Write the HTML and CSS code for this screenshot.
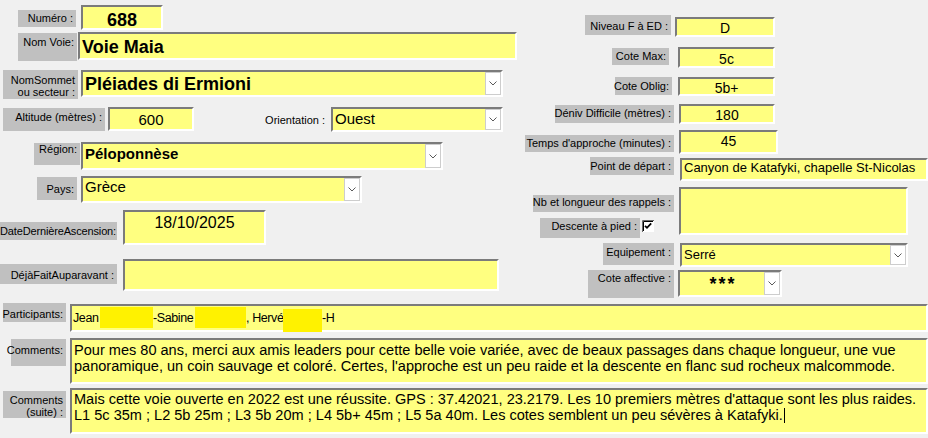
FILE: index.html
```html
<!DOCTYPE html>
<html lang="fr">
<head>
<meta charset="utf-8">
<title>Voie Maia</title>
<link rel="stylesheet" href="styles.css">
</head>
<body>
<div class="form">
  <div class="top">
    <div class="left">
      <div class="row r1">
        <div class="lbl l-num"><span>Numéro :</span></div>
        <div class="fld f-num fb18 center">688</div>
      </div>
      <div class="row r2">
        <div class="lbl l-voie"><span>Nom Voie:</span></div>
        <div class="fld f-voie fb18">Voie Maia</div>
      </div>
      <div class="row r3">
        <div class="lbl lbl2 l-som"><span>NomSommet<br>ou secteur :</span></div>
        <div class="fld combo f-som">
          <div class="val fb18 pt2">Pléiades di Ermioni</div>
          <div class="btn"><svg width="8" height="5" viewBox="0 0 8 5"><path d="M0.5 0.5 L4 4 L7.5 0.5" fill="none" stroke="#5a5a5a" stroke-width="1"/></svg></div>
        </div>
      </div>
      <div class="row r4">
        <div class="lbl l-alt"><span>Altitude (mètres) :</span></div>
        <div class="fld f-alt f15 center">600</div>
        <div class="orient">Orientation :</div>
        <div class="fld combo f-ori">
          <div class="val f15 pt1">Ouest</div>
          <div class="btn"><svg width="8" height="5" viewBox="0 0 8 5"><path d="M0.5 0.5 L4 4 L7.5 0.5" fill="none" stroke="#5a5a5a" stroke-width="1"/></svg></div>
        </div>
      </div>
      <div class="row r5">
        <div class="lbl l-reg"><span>Région:</span></div>
        <div class="fld combo f-reg">
          <div class="val fb15 pt1">Péloponnèse</div>
          <div class="btn"><svg width="8" height="5" viewBox="0 0 8 5"><path d="M0.5 0.5 L4 4 L7.5 0.5" fill="none" stroke="#5a5a5a" stroke-width="1"/></svg></div>
        </div>
      </div>
      <div class="row r6">
        <div class="lbl l-pays"><span>Pays:</span></div>
        <div class="fld combo f-pays">
          <div class="val f15 pt0">Grèce</div>
          <div class="btn"><svg width="8" height="5" viewBox="0 0 8 5"><path d="M0.5 0.5 L4 4 L7.5 0.5" fill="none" stroke="#5a5a5a" stroke-width="1"/></svg></div>
        </div>
      </div>
      <div class="row r7">
        <div class="lbl l-date"><span>DateDernièreAscension:</span></div>
        <div class="fld f-date f16 center">18/10/2025</div>
      </div>
      <div class="row r8">
        <div class="lbl l-deja"><span>DéjàFaitAuparavant :</span></div>
        <div class="fld f-deja"></div>
      </div>
    </div>

    <div class="right">
      <div class="row rr1">
        <div class="lbl l-niv"><span>Niveau F à ED :</span></div>
        <div class="fld f-niv f14 center">D</div>
      </div>
      <div class="row rr2">
        <div class="lbl l-max"><span>Cote Max:</span></div>
        <div class="fld f-max f14 center">5c</div>
      </div>
      <div class="row rr3">
        <div class="lbl l-obl"><span>Cote Oblig:</span></div>
        <div class="fld f-obl f14 center">5b+</div>
      </div>
      <div class="row rr4">
        <div class="lbl l-den"><span>Déniv Difficile (mètres) :</span></div>
        <div class="fld f-den f14 center">180</div>
      </div>
      <div class="row rr5">
        <div class="lbl l-tmp"><span>Temps d'approche (minutes) :</span></div>
        <div class="fld f-tmp f14 center">45</div>
      </div>
      <div class="row rr6">
        <div class="lbl l-pt"><span>Point de départ :</span></div>
        <div class="fld f-pt f13">Canyon de Katafyki, chapelle St-Nicolas</div>
      </div>
      <div class="row rr7">
        <div class="stack">
          <div class="lbl l-nb"><span>Nb et longueur des rappels :</span></div>
          <div class="desc">
            <div class="lbl l-desc"><span>Descente à pied :</span></div>
            <svg class="chk" width="12" height="12" viewBox="0 0 12 12"><rect x="0" y="0" width="12" height="12" fill="#fff"/><path d="M0.5 12 V0.5 H12" fill="none" stroke="#6a6a6a"/><path d="M1.5 11 V1.5 H11" fill="none" stroke="#000"/><path d="M3 5.8 L5 7.8 L9.2 3.4" fill="none" stroke="#000" stroke-width="1.8"/></svg>
          </div>
        </div>
        <div class="fld f-nb"></div>
      </div>
      <div class="row rr8">
        <div class="lbl l-eq"><span>Equipement :</span></div>
        <div class="fld combo f-eq">
          <div class="val f13 pt2">Serré</div>
          <div class="btn"><svg width="8" height="5" viewBox="0 0 8 5"><path d="M0.5 0.5 L4 4 L7.5 0.5" fill="none" stroke="#5a5a5a" stroke-width="1"/></svg></div>
        </div>
      </div>
      <div class="row rr9">
        <div class="lbl l-ca"><span>Cote affective :</span></div>
        <div class="fld combo f-ca">
          <div class="val stars center">***</div>
          <div class="btn"><svg width="8" height="5" viewBox="0 0 8 5"><path d="M0.5 0.5 L4 4 L7.5 0.5" fill="none" stroke="#5a5a5a" stroke-width="1"/></svg></div>
        </div>
      </div>
    </div>
  </div>

  <div class="bottom">
    <div class="row b1">
      <div class="lbl l-part"><span>Participants:</span></div>
      <div class="fld f-part">
        <span class="seg w-jean">Jean</span><span class="red red1"></span><span class="seg w-sab">-Sabine</span><span class="red red2"></span><span class="seg w-herve">, Hervé</span><span class="red red3"></span><span class="seg">-H</span>
      </div>
    </div>
    <div class="row b2">
      <div class="lbl l-com"><span>Comments:</span></div>
      <div class="fld f-com">Pour mes 80 ans, merci aux amis leaders pour cette belle voie variée, avec de beaux passages dans chaque longueur, une vue<br>panoramique, un coin sauvage et coloré. Certes, l'approche est un peu raide et la descente en flanc sud rocheux malcommode.</div>
    </div>
    <div class="row b3">
      <div class="lbl lbl2 l-com2"><span>Comments<br>(suite) :</span></div>
      <div class="fld f-com f-com2">Mais cette voie ouverte en 2022 est une réussite. GPS : 37.42021, 23.2179. Les 10 premiers mètres d'attaque sont les plus raides.<br>L1 5c 35m ; L2 5b 25m ; L3 5b 20m ; L4 5b+ 45m ; L5 5a 40m. Les cotes semblent un peu sévères à Katafyki.<span class="caret"></span></div>
    </div>
  </div>
</div>
</body>
</html>
```

FILE: styles.css
```css
* { box-sizing: border-box; }
html, body { margin: 0; padding: 0; }
body {
  background: #f0f0f0;
  font-family: "Liberation Sans", Arial, sans-serif;
  color: #000;
  width: 928px;
  height: 438px;
  overflow: hidden;
}

.top { display: flex; height: 303px; }
.left { width: 525px; flex: none; padding-top: 5px; }
.right { width: 403px; flex: none; padding-top: 15px; }
.row { display: flex; align-items: flex-start; }

/* labels */
.lbl {
  background: #c0c0c0;
  font-size: 11px;
  line-height: normal;
  display: flex;
  justify-content: flex-end;
  align-items: flex-start;
  padding-right: 3px;
  white-space: nowrap;
  flex: none;
}
.lbl span { text-align: right; }
.lbl2 span { line-height: 12px; }

/* fields */
.fld {
  background: #ffff80;
  border: 2px solid;
  border-color: #7b7b7b #ffffff #ffffff #7b7b7b;
  flex: none;
  white-space: nowrap;
  overflow: hidden;
  padding: 0 2px;
  line-height: normal;
}
.combo { display: flex; align-items: stretch; padding: 0; }
.combo .val { flex: 1; padding-left: 2px; padding-right: 2px; overflow: hidden; }
.btn {
  width: 16px;
  flex: none;
  background: #ffffff;
  border: 1px solid #cdcdcd;
  display: flex;
  align-items: center;
  justify-content: center;
}
.center { text-align: center; }

.pt0 { padding-top: 0; }
.pt1 { padding-top: 1px; }
.pt2 { padding-top: 2px; }

.fb18 { font-weight: bold; font-size: 18px; }
.fb15 { font-weight: bold; font-size: 15px; }
.f16 { font-size: 16px; }
.f15 { font-size: 15px; }
.f14 { font-size: 14px; }
.f13 { font-size: 13px; }

/* left column rows */
.r1 { height: 27px; }
.r2 { height: 38px; }
.r3 { height: 37px; }
.r4 { height: 35px; }
.r5 { height: 33px; }
.r6 { height: 35px; }
.r7 { height: 49px; }
.r8 { height: 44px; }

.l-num { margin: 5px 0 0 18px; width: 58px; height: 17px; padding-top: 2px; }
.f-num { margin-left: 5px; width: 82px; height: 25px; padding-top: 3px; }

.l-voie { margin: 1px 0 0 18px; width: 59px; height: 28px; padding-top: 3px; }
.f-voie { margin-left: 1px; width: 439px; height: 28px; padding-top: 3px; }

.l-som { margin: 0 0 0 3px; width: 75px; height: 29px; padding-top: 4px; }
.f-som { margin-left: 3px; width: 422px; height: 27px; }

.l-alt { margin: 1px 0 0 3px; width: 102px; height: 23px; padding-top: 3px; }
.f-alt { margin-left: 3px; width: 86px; height: 24px; padding-top: 2px; }
.orient {
  width: 134px;
  flex: none;
  text-align: right;
  font-size: 11px;
  padding: 7px 3px 0 0;
  white-space: nowrap;
}
.f-ori { margin-left: 3px; width: 172px; height: 25px; }

.l-reg { margin: 1px 0 0 34px; width: 46px; height: 22px; padding-top: 0; }
.f-reg { margin-left: 1px; width: 362px; height: 28px; }

.l-pays { margin: 2px 0 0 37px; width: 40px; height: 23px; padding-top: 6px; }
.f-pays { margin: 1px 0 0 4px; width: 281px; height: 27px; }

.l-date { margin: 12px 0 0 0; width: 117px; height: 18px; padding: 3px 1px 0 0; letter-spacing: -0.15px; }
.f-date { margin-left: 6px; width: 143px; height: 35px; padding-top: 1.5px; }

.l-deja { margin: 5px 0 0 0; width: 117px; height: 20px; padding-top: 5px; }
.f-deja { margin-left: 6px; width: 376px; height: 32px; }

/* right column rows */
.rr1 { height: 32px; }
.rr2 { height: 30px; }
.rr3 { height: 27px; }
.rr4 { height: 26px; }
.rr5 { height: 27px; }
.rr6 { height: 30px; }
.rr7 { height: 56px; }
.rr8 { height: 27px; }
.rr9 { height: 30px; }

.l-niv { margin: 0 0 0 60px; width: 86px; height: 20px; padding-top: 5px; }
.f-niv { margin: 2px 0 0 4px; width: 100px; height: 20px; padding-top: 1px; }

.l-max { margin: 1px 0 0 87px; width: 57px; height: 17px; padding-top: 2px; }
.f-max { margin-left: 9px; width: 97px; height: 21px; padding-top: 1.5px; }

.l-obl { margin: 0 0 0 90px; width: 57px; height: 18px; padding-top: 2.5px; }
.f-obl { margin-left: 6px; width: 97px; height: 19px; padding-top: 1px; }

.l-den { margin: 1px 0 0 30px; width: 119px; height: 18px; padding-top: 1.5px; }
.f-den { margin-left: 5px; width: 96px; height: 20px; padding-top: 1px; }

.l-tmp { margin: 5px 0 0 0; width: 149px; height: 17px; padding-top: 1.5px; }
.f-tmp { margin-left: 5px; width: 99px; height: 24px; padding-top: 1px; }

.l-pt { margin: 0 0 0 65px; width: 84px; height: 18px; padding-top: 3px; }
.f-pt { margin: 1px 0 0 6px; width: 248px; height: 23px; padding-top: 0; }

.stack { width: 149px; flex: none; }
.l-nb { margin: 8px 0 0 8px; width: 141px; height: 17px; padding-top: 1px; }
.desc { display: flex; align-items: flex-start; margin-top: 6px; }
.l-desc { margin-left: 15px; width: 100px; height: 20px; padding-top: 2px; }
.chk { flex: none; margin: 2px 0 0 2px; display: block; }
.f-nb { margin-left: 5px; width: 229px; height: 48px; }

.l-eq { margin: 0 0 0 78px; width: 71px; height: 22px; padding-top: 2.5px; }
.f-eq { margin-left: 6px; width: 228px; height: 24px; }

.l-ca { margin: 0 0 0 63px; width: 86px; height: 28px; padding-top: 2px; }
.f-ca { margin-left: 4px; width: 104px; height: 27px; }
.stars {
  font-size: 18px;
  font-weight: bold;
  letter-spacing: 2px;
  text-indent: 2px;
  line-height: 20px;
  padding-top: 2px;
}

/* bottom */
.b1 { height: 35px; }
.b2 { height: 50px; }

.l-part { margin: 0 0 0 3px; width: 63px; height: 19px; padding-top: 4.5px; }
.f-part {
  margin: 1px 0 0 4px;
  width: 858px;
  height: 28px;
  padding: 0 0 0 1px;
  display: flex;
  align-items: flex-start;
  overflow: visible;
  font-size: 12.5px;
  letter-spacing: -0.4px;
}
.seg { padding-top: 4.5px; white-space: pre; flex: none; }
.w-jean { width: 27px; }
.w-sab { width: 42px; }
.w-herve { width: 37px; }
.red { background: #fff200; flex: none; display: block; }
.red1 { width: 53px; height: 21px; margin-top: 1px; }
.red2 { width: 51px; height: 21px; margin-top: 1px; }
.red3 { width: 39px; height: 23px; margin-top: 3px; }

.l-com { margin: 1px 0 0 11px; width: 55px; height: 27px; padding-top: 5px; }
.f-com {
  margin-left: 4px;
  width: 858px;
  height: 46px;
  padding: 1.5px 2px 0 2px;
  font-size: 14.55px;
  line-height: 16px;
  white-space: nowrap;
}
.l-com2 { margin: 3px 0 0 3px; width: 63px; height: 27px; padding-top: 2.5px; }
.f-com2 { padding-top: 0.5px; }
.caret {
  display: inline-block;
  width: 1px;
  height: 15px;
  background: #000;
  vertical-align: -3px;
  margin-left: 1px;
}
```
